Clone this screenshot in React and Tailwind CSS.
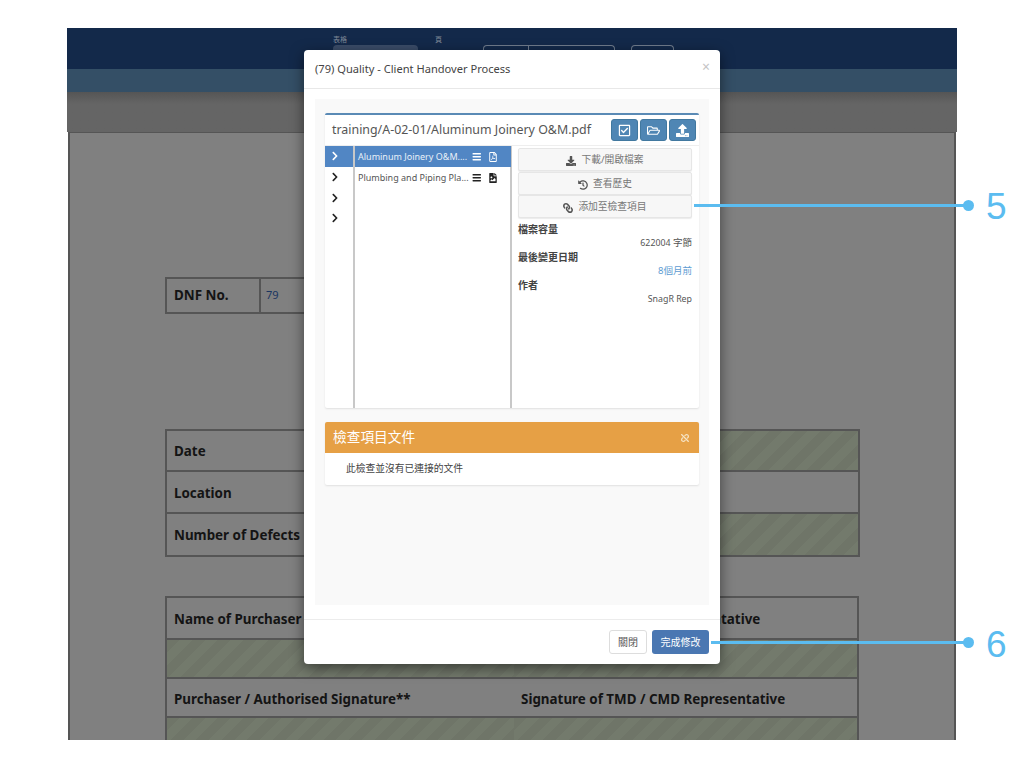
import React from "react";
import {
  FaBars,
  FaChevronRight,
  FaDownload,
  FaFileImage,
  FaHistory,
  FaLink,
  FaRegCheckSquare,
  FaRegFilePdf,
  FaRegFolderOpen,
  FaUnlink,
  FaUpload,
} from "react-icons/fa";

const hatch =
  "bg-[repeating-linear-gradient(135deg,#6f7568_0px,#6f7568_9px,#737a6c_9px,#737a6c_18px)]";
const sans = "font-['Noto_Sans','Noto_Sans_CJK_TC',sans-serif]";

function Cell({ children, shaded, className = "pt-[2px]" }) {
  return (
    <div
      className={`flex items-center whitespace-nowrap px-[7px] text-[13.4px] font-bold text-[#141414] ${shaded ? hatch : ""} ${className}`}
    >
      {children}
    </div>
  );
}

function Background() {
  return (
    <div className="flex h-[712px] w-[890px] flex-col overflow-hidden">
      <div className="flex h-[41px] shrink-0 bg-[#13294a] pl-[266px] pt-[7px] text-[7px] leading-[9px] text-[#7d8796]">
        <div className="w-[102px]">
          <div>表格</div>
          <div className="mt-[1px] h-[8px] w-[85px] rounded-t-sm bg-[#3a4c68]"></div>
        </div>
        <div className="w-[48px]">頁</div>
        <div className="mt-[10px] flex h-[8px] w-[132px] rounded-t-sm border border-b-0 border-[#6f7b8c]">
          <div className="w-[45px] border-r border-[#6f7b8c]"></div>
        </div>
        <div className="ml-[16px] mt-[10px] h-[8px] w-[43px] rounded-t-sm border border-b-0 border-[#6f7b8c]"></div>
      </div>
      <div className="h-[23px] shrink-0 bg-[#344f66]"></div>
      <div className="h-[40px] shrink-0 bg-gradient-to-b from-[#555555] to-[#656565] to-[30%]"></div>
      <div className="mx-[1px] flex-1 border-x-2 border-t border-[#555555] bg-[#808080] pl-[95px] pt-[144px]">
        <div className="flex h-[37px] w-[300px] border-2 border-[#555555]">
          <Cell className="w-[94px] border-r-2 border-[#555555]">DNF No.</Cell>
          <div className="flex flex-1 items-center px-[5px] text-[11px] text-[#1a3560]">79</div>
        </div>
        <div className="mt-[115px] w-[695px] border-2 border-[#555555]">
          <div className="grid h-[41px] grid-cols-[348px_1fr] border-b-2 border-[#555555]">
            <Cell>Date</Cell>
            <Cell shaded />
          </div>
          <div className="grid h-[42px] grid-cols-[348px_1fr] border-b-2 border-[#555555]">
            <Cell>Location</Cell>
            <Cell />
          </div>
          <div className="grid h-[41px] grid-cols-[348px_1fr]">
            <Cell>Number of Defects</Cell>
            <Cell shaded />
          </div>
        </div>
        <div className="mt-[39px] w-[694px] border-2 border-[#555555]">
          <div className="grid h-[42px] grid-cols-[347px_1fr] border-b-2 border-[#555555]">
            <Cell>Name of Purchaser / Authorised</Cell>
            <Cell>Name of TMD / CMD Representative</Cell>
          </div>
          <div className="grid h-[39px] grid-cols-[347px_1fr] border-b-2 border-[#555555]">
            <Cell shaded />
            <Cell shaded />
          </div>
          <div className="grid h-[39px] grid-cols-[347px_1fr] border-b-2 border-[#555555]">
            <Cell className="pt-[4px]">Purchaser / Authorised Signature**</Cell>
            <Cell className="pt-[4px]">Signature of TMD / CMD Representative</Cell>
          </div>
          <div className="grid h-[60px] grid-cols-[347px_1fr]">
            <Cell shaded />
            <Cell shaded />
          </div>
        </div>
      </div>
    </div>
  );
}

function ToolButton({ children }) {
  return (
    <button className="flex h-[22px] w-[27px] items-center justify-center rounded-[3px] border border-[#41789f] bg-[#4f86b4] text-[13px] text-white">
      {children}
    </button>
  );
}

function ActionButton({ icon, label }) {
  return (
    <button className="flex h-[23px] w-full items-center justify-center gap-[5px] rounded-[2px] border border-[#e6e6e6] bg-[#f7f7f7] pt-[2px] text-[9.75px] text-[#777777] shadow-[0_1px_1px_rgba(0,0,0,0.08)]">
      <span className="text-[10px] text-[#555]">{icon}</span>
      {label}
    </button>
  );
}

function FileRow({ name, icon, selected }) {
  return (
    <div
      className={`relative flex h-[21px] items-center pl-[3px] text-[9px] ${selected ? "mr-[-1px] bg-[#5186c4] text-[#e8f0f8]" : "text-[#555]"}`}
    >
      <span className="w-[112px] whitespace-nowrap">{name}</span>
      <FaBars className={`ml-[2px] text-[9.5px] ${selected ? "text-white" : "text-[#222]"}`} />
      <span className={`ml-[6px] text-[10px] ${selected ? "text-white" : "text-[#222]"}`}>{icon}</span>
    </div>
  );
}

function InfoBlock({ label, children, valueClass = "text-[#555]" }) {
  return (
    <>
      <div className="h-[14px] text-[10px] font-bold leading-[14px] text-[#444]">{label}</div>
      <div className={`h-[14px] text-right text-[9.5px] leading-[14px] ${valueClass}`}>{children}</div>
    </>
  );
}

function Modal() {
  return (
    <div
      className={`absolute left-[304px] top-[50px] flex h-[614px] w-[416px] flex-col rounded-[4px] bg-white shadow-[0_4px_14px_rgba(0,0,0,0.5)] ${sans}`}
    >
      <div className="flex h-[39px] shrink-0 items-center justify-between border-b border-[#e8e8e8] pl-[11px] pr-[10px]">
        <div className="text-[11.1px] text-[#444]">(79) Quality - Client Handover Process</div>
        <div className="mb-[6px] text-[14px] text-[#c4c4c4]">×</div>
      </div>
      <div className="mx-[11px] mt-[10px] h-[506px] shrink-0 bg-[#f9f9f9] px-[10px] pt-[14px]">
        <div className="rounded-[2px] border-t-2 border-[#5a8ab5] bg-white shadow-[0_1px_2px_rgba(0,0,0,0.1)]">
          <div className="flex h-[30px] items-center justify-between pl-[7px] pr-[3px]">
            <div className="whitespace-nowrap text-[12.4px] text-[#555]">training/A-02-01/Aluminum Joinery O&M.pdf</div>
            <div className="flex gap-[2px]">
              <ToolButton>
                <FaRegCheckSquare />
              </ToolButton>
              <ToolButton>
                <FaRegFolderOpen />
              </ToolButton>
              <ToolButton>
                <FaUpload />
              </ToolButton>
            </div>
          </div>
          <div className="flex h-[263px] border-t border-[#eeeeee]">
            <div className="w-[28px] shrink-0">
              {[0, 1, 2, 3].map((i) => (
                <div
                  key={i}
                  className={`flex h-[20.7px] items-center pl-[5px] text-[10px] ${i === 0 ? "bg-[#5186c4] text-white" : "text-[#222]"}`}
                >
                  <FaChevronRight />
                </div>
              ))}
            </div>
            <div className="w-[159px] shrink-0 border-x-2 border-[#c8c8c8]">
              <FileRow selected name="Aluminum Joinery O&M...." icon={<FaRegFilePdf />} />
              <FileRow name="Plumbing and Piping Pla..." icon={<FaFileImage />} />
            </div>
            <div className="flex-1 pl-[6px] pr-[7px] pt-[2px]">
              <ActionButton icon={<FaDownload />} label="下載/開啟檔案" />
              <div className="h-[1px]"></div>
              <ActionButton icon={<FaHistory />} label="查看歷史" />
              <ActionButton icon={<FaLink className="scale-x-[-1]" />} label="添加至檢查項目" />
              <div className="mt-[4px]">
                <InfoBlock label="檔案容量">
                  <span className="text-[8.8px]">622004</span> 字節
                </InfoBlock>
                <InfoBlock label="最後變更日期" valueClass="text-[#5d9bd2]">
                  8個月前
                </InfoBlock>
                <InfoBlock label="作者">
                  <span className="text-[8.8px]">SnagR Rep</span>
                </InfoBlock>
              </div>
            </div>
          </div>
        </div>
        <div className="mt-[14px] rounded-[2px] bg-white pb-[1px] shadow-[0_1px_2px_rgba(0,0,0,0.1)]">
          <div className="flex h-[31px] items-center justify-between rounded-t-[2px] bg-[#e6a045] pl-[8px] pr-[10px] text-white">
            <span className="mb-[1px] text-[13.7px]">檢查項目文件</span>
            <FaUnlink className="text-[8px] text-[#f6e4c6]" />
          </div>
          <div className="flex h-[31px] items-center pl-[21px] pt-[1px] text-[9.75px] text-[#444]">
            此檢查並沒有已連接的文件
          </div>
        </div>
      </div>
      <div className="mt-[14px] flex flex-1 items-start justify-end gap-[5px] border-t border-[#ececec] pr-[11px] pt-[10px]">
        <button className="h-[24px] w-[38px] rounded-[3px] border border-[#dddddd] bg-white text-[10px] text-[#555]">
          關閉
        </button>
        <button className="h-[24px] w-[57px] rounded-[3px] bg-[#4a77b2] text-[10px] text-white">
          完成修改
        </button>
      </div>
    </div>
  );
}

function Callout({ top, left, width, label, labelClass }) {
  return (
    <div
      className="absolute flex h-[32px] items-center font-['Liberation_Sans',sans-serif] text-[37px] text-[#5bbcf0]"
      style={{ top, left }}
    >
      <div className="h-[3px] bg-[#5bbcf0]" style={{ width }}></div>
      <div className="ml-[-2px] h-[11px] w-[11px] rounded-full bg-[#5bbcf0]"></div>
      <div className={`ml-[12px] leading-none ${labelClass}`}>{label}</div>
    </div>
  );
}

export default function App() {
  return (
    <div className={`relative h-[768px] w-[1024px] overflow-hidden bg-white pl-[67px] pt-[28px] ${sans}`}>
      <Background />
      <Modal />
      <Callout top={189} left={694} width={271} label="5" labelClass="pt-[2px]" />
      <Callout top={626} left={711} width={254} label="6" labelClass="pt-[4px]" />
    </div>
  );
}
